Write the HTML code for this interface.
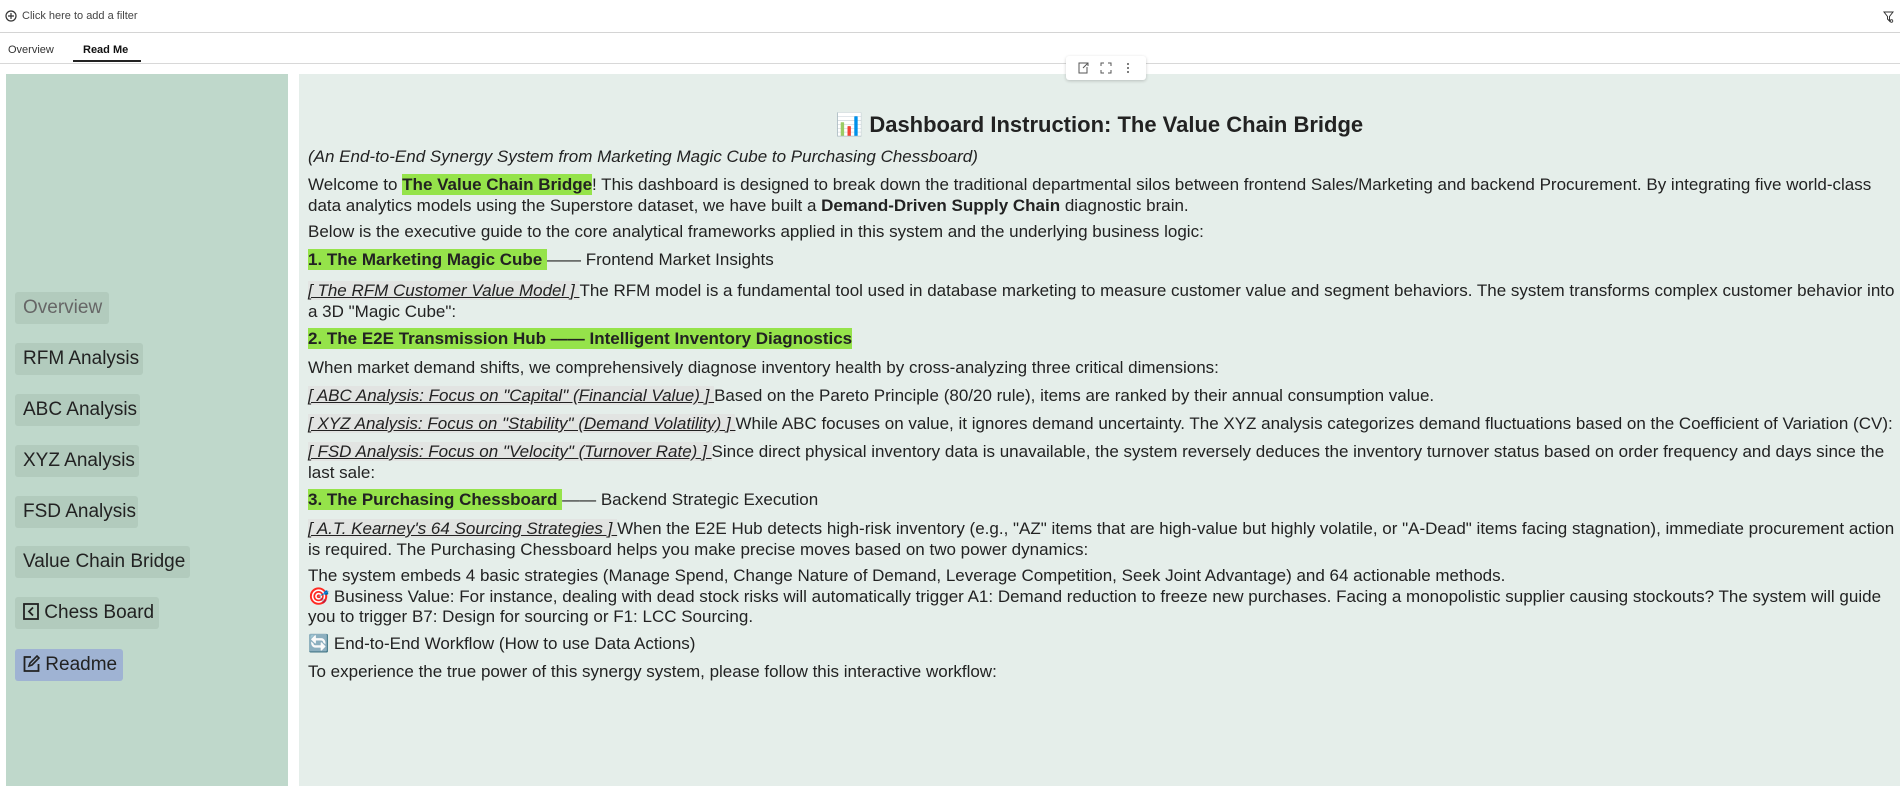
<!DOCTYPE html>
<html><head><meta charset="utf-8"><style>
*{margin:0;padding:0;box-sizing:border-box}
body{width:1900px;height:786px;overflow:hidden;background:#fff;font-family:"Liberation Sans",sans-serif;color:#222;position:relative}
.filter{position:absolute;left:0;top:0;width:1900px;height:33px;border-bottom:1px solid #d4d4d4}
.filter span{position:absolute;left:22px;top:10px;font-size:11px;color:#444}
.tabs{position:absolute;left:0;top:33px;width:1900px;height:31px;border-bottom:1px solid #d8d8d8}
.tab{position:absolute;top:11px;font-size:11px;color:#333}
.left{position:absolute;left:6px;top:74px;width:282px;height:712px;background:#bfd8cb}
.btn{position:absolute;left:9px;height:32px;background:#b2cbbd;border-radius:3px;font-size:19px;line-height:32px;padding-left:8px;color:#222;white-space:nowrap}
.btn svg{vertical-align:-2px}
.right{position:absolute;left:299px;top:74px;width:1601px;height:712px;background:#e5eeea}
.t{position:absolute;left:9px;white-space:nowrap;font-size:17px;letter-spacing:0;line-height:20.5px;color:#222}
.hl{background:#95e34a;font-weight:bold;padding:1px 0}
.lk{font-style:italic;text-decoration:underline;background:#e2e4e2}
.tb{position:absolute;left:1066px;top:56px;width:80px;height:24px;background:#fff;border-radius:3px;box-shadow:0 1px 3px rgba(0,0,0,.2);z-index:5}
</style></head><body>
<div class="filter">
<svg style="position:absolute;left:5px;top:10px" width="12" height="12" viewBox="0 0 12 12"><circle cx="6" cy="6" r="5" fill="none" stroke="#333" stroke-width="1.2"/><path d="M6 3v6M3 6h6" stroke="#333" stroke-width="1.2"/></svg>
<span>Click here to add a filter</span>
<svg style="position:absolute;left:1883px;top:11px" width="11" height="12" viewBox="0 0 11 12"><path d="M1 1h9L6.5 5.5V10L4.5 8V5.5Z" fill="none" stroke="#333" stroke-width="1"/><circle cx="8.5" cy="10" r="1.3" fill="none" stroke="#333" stroke-width=".8"/></svg>
</div>
<div class="tabs">
<span class="tab" style="left:8px">Overview</span>
<span class="tab" style="left:83px;font-weight:bold;color:#111">Read Me</span>
<div style="position:absolute;left:73px;top:27px;width:68px;height:2px;background:#222"></div>
</div>
<div class="tb">
<svg style="position:absolute;left:11px;top:6px" width="12" height="12" viewBox="0 0 12 12"><path d="M8 1H2v10h8V5M6 6l5-5M8 1h3v3" fill="none" stroke="#555" stroke-width="1"/></svg>
<svg style="position:absolute;left:34px;top:6px" width="12" height="12" viewBox="0 0 12 12"><path d="M1 4V1h3M8 1h3v3M11 8v3H8M4 11H1V8" fill="none" stroke="#555" stroke-width="1"/></svg>
<svg style="position:absolute;left:60px;top:6px" width="4" height="12" viewBox="0 0 4 12"><circle cx="2" cy="2" r="1" fill="#555"/><circle cx="2" cy="6" r="1" fill="#555"/><circle cx="2" cy="10" r="1" fill="#555"/></svg>
</div>
<div class="left">
<div class="btn" style="top:218px;width:94px;color:#666">Overview</div>
<div class="btn" style="top:269px;width:128px">RFM Analysis</div>
<div class="btn" style="top:320px;width:125px">ABC Analysis</div>
<div class="btn" style="top:371px;width:124px">XYZ Analysis</div>
<div class="btn" style="top:422px;width:123px">FSD Analysis</div>
<div class="btn" style="top:472px;width:175px">Value Chain Bridge</div>
<div class="btn" style="top:523px;width:144px"><svg width="16" height="17" viewBox="0 0 16 17"><rect x="1" y="1" width="14" height="15" fill="none" stroke="#222" stroke-width="1.8"/><path d="M10 4.5L6 8.5l4 4" fill="none" stroke="#222" stroke-width="1.8"/></svg> Chess Board</div>
<div class="btn" style="top:575px;width:108px;background:#9fb3d3"><svg width="17" height="17" viewBox="0 0 17 17"><path d="M8 2H1.5v14h14V9" fill="none" stroke="#222" stroke-width="1.8"/><path d="M6 11l1-3 7-7 2 2-7 7z" fill="none" stroke="#222" stroke-width="1.6"/></svg> Readme</div>
</div>
<div class="right">
<div style="position:absolute;left:0;width:1601px;top:38px;text-align:center;font-size:22px;font-weight:bold;color:#222">📊 Dashboard Instruction: The Value Chain Bridge</div>
<div class="t" style="top:73px;font-style:italic">(An End-to-End Synergy System from Marketing Magic Cube to Purchasing Chessboard)</div>
<div class="t" style="top:101px">Welcome to <span class="hl">The Value Chain Bridge</span>! This dashboard is designed to break down the traditional departmental silos between frontend Sales/Marketing and backend Procurement. By integrating five world-class<br>data analytics models using the Superstore dataset, we have built a <b>Demand-Driven Supply Chain</b> diagnostic brain.</div>
<div class="t" style="top:148px">Below is the executive guide to the core analytical frameworks applied in this system and the underlying business logic:</div>
<div class="t" style="top:176px"><span class="hl">1. The Marketing Magic Cube </span>—— Frontend Market Insights</div>
<div class="t" style="top:207px"><span class="lk">[ The RFM Customer Value Model ] </span>The RFM model is a fundamental tool used in database marketing to measure customer value and segment behaviors. The system transforms complex customer behavior into<br>a 3D "Magic Cube":</div>
<div class="t" style="top:255px"><span class="hl">2. The E2E Transmission Hub —— Intelligent Inventory Diagnostics</span></div>
<div class="t" style="top:284px">When market demand shifts, we comprehensively diagnose inventory health by cross-analyzing three critical dimensions:</div>
<div class="t" style="top:312px"><span class="lk">[ ABC Analysis: Focus on "Capital" (Financial Value) ] </span>Based on the Pareto Principle (80/20 rule), items are ranked by their annual consumption value.</div>
<div class="t" style="top:340px"><span class="lk">[ XYZ Analysis: Focus on "Stability" (Demand Volatility) ] </span>While ABC focuses on value, it ignores demand uncertainty. The XYZ analysis categorizes demand fluctuations based on the Coefficient of Variation (CV):</div>
<div class="t" style="top:368px"><span class="lk">[ FSD Analysis: Focus on "Velocity" (Turnover Rate) ] </span>Since direct physical inventory data is unavailable, the system reversely deduces the inventory turnover status based on order frequency and days since the<br>last sale:</div>
<div class="t" style="top:416px"><span class="hl">3. The Purchasing Chessboard </span>—— Backend Strategic Execution</div>
<div class="t" style="top:445px"><span class="lk">[ A.T. Kearney's 64 Sourcing Strategies ] </span>When the E2E Hub detects high-risk inventory (e.g., "AZ" items that are high-value but highly volatile, or "A-Dead" items facing stagnation), immediate procurement action<br>is required. The Purchasing Chessboard helps you make precise moves based on two power dynamics:</div>
<div class="t" style="top:492px">The system embeds 4 basic strategies (Manage Spend, Change Nature of Demand, Leverage Competition, Seek Joint Advantage) and 64 actionable methods.<br>🎯 Business Value: For instance, dealing with dead stock risks will automatically trigger A1: Demand reduction to freeze new purchases. Facing a monopolistic supplier causing stockouts? The system will guide<br>you to trigger B7: Design for sourcing or F1: LCC Sourcing.</div>
<div class="t" style="top:560px">🔄 End-to-End Workflow (How to use Data Actions)</div>
<div class="t" style="top:588px">To experience the true power of this synergy system, please follow this interactive workflow:</div>
</div>
</body></html>
